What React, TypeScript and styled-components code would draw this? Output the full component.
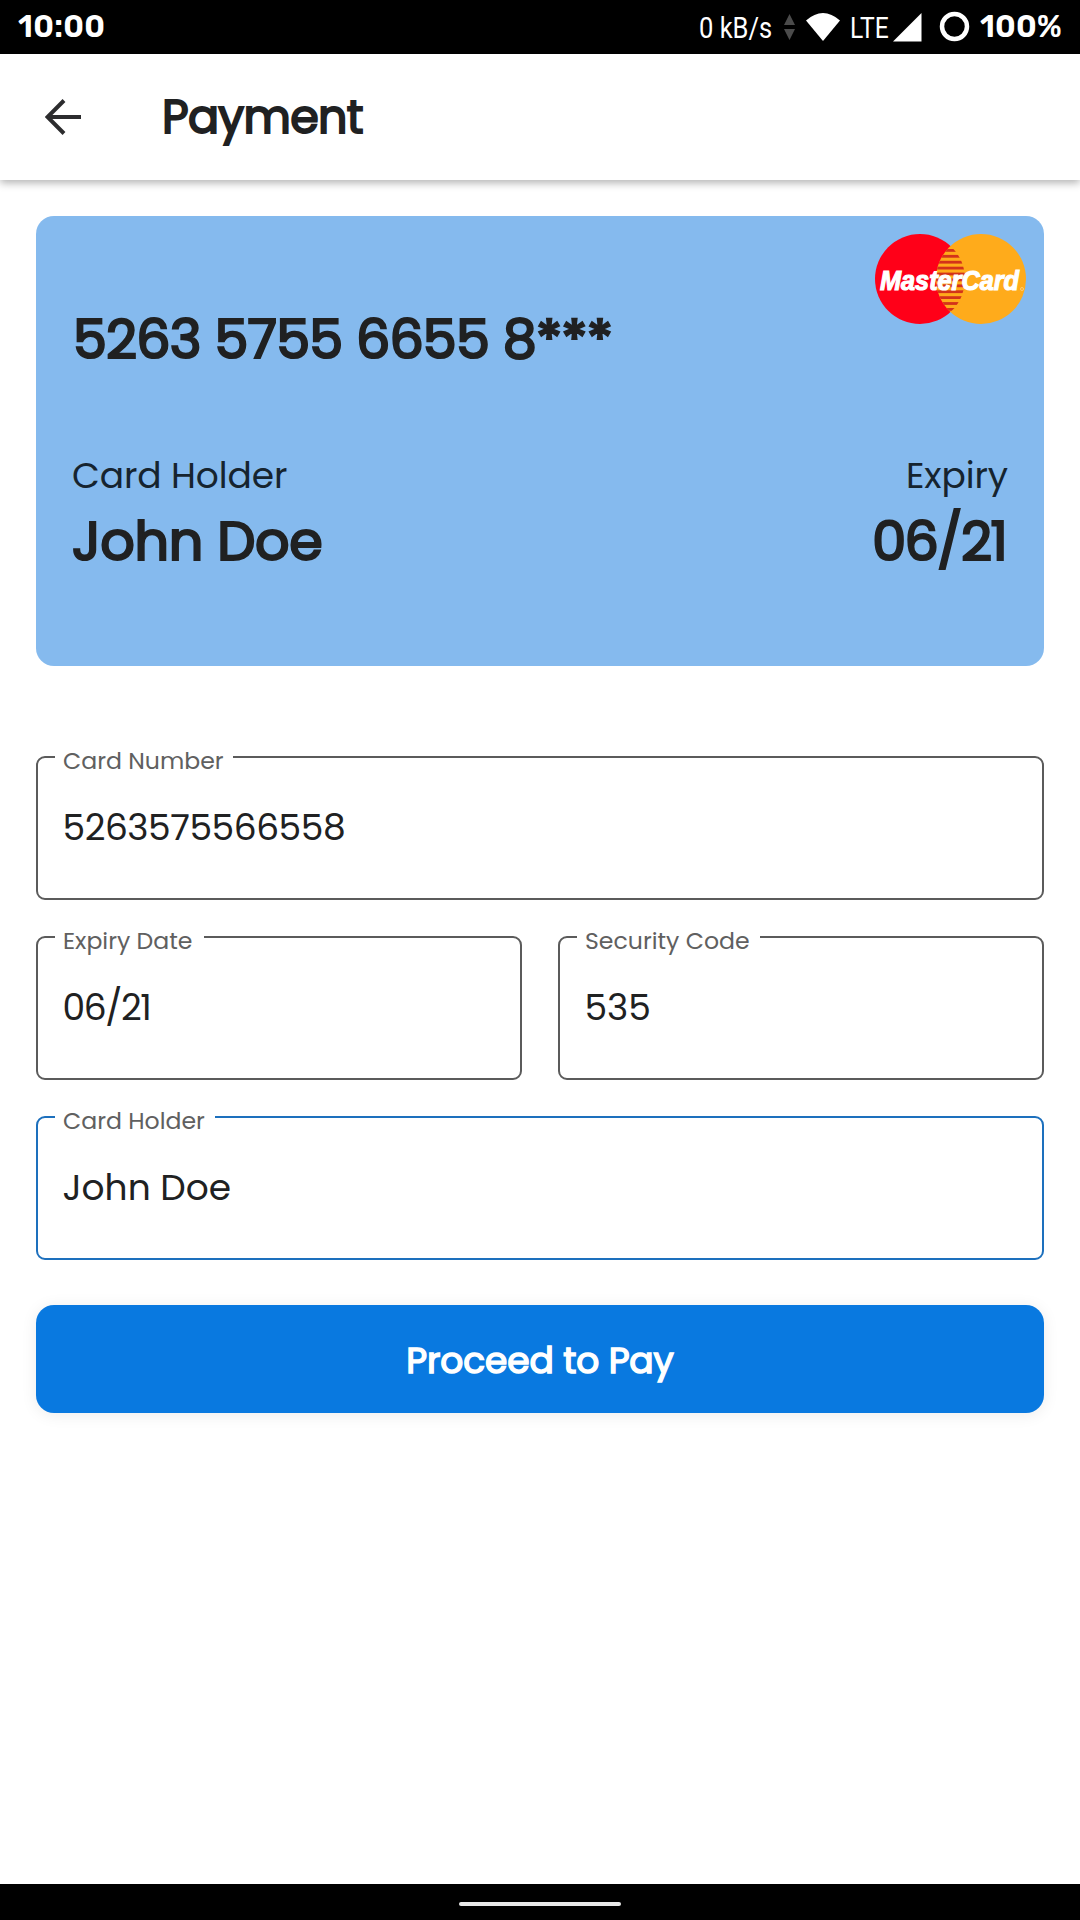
import React from "react";
import styled, { createGlobalStyle } from "styled-components";

const Global = createGlobalStyle`
  * { box-sizing: border-box; }
  body { margin: 0; background: #fff; }
`;

const Screen = styled.div`
  display: flex;
  flex-direction: column;
  width: 1080px;
  height: 1920px;
  overflow: hidden;
  background: #fff;
  color: #202122;
  font-family: Poppins, Inter, "Liberation Sans", sans-serif;
`;

const StatusBar = styled.div`
  display: flex;
  align-items: center;
  justify-content: space-between;
  flex: none;
  height: 54px;
  padding: 0 18px;
  background: #000;
  color: #fff;
`;

const StatusGroup = styled.div`
  display: flex;
  align-items: center;
`;

const StatusStrong = styled.span`
  font: 600 31px/52px Rubik, Inter, sans-serif;
  letter-spacing: 0.3px;
  white-space: nowrap;
`;

const StatusLight = styled.span<{ $width: number; $ratio: number }>`
  width: ${(p) => p.$width}px;
  padding-top: 2px;
  font: 400 29px/54px Roboto, sans-serif;
  white-space: nowrap;
  transform: scaleX(${(p) => p.$ratio});
  transform-origin: left center;
`;

const StatusIcons = styled.svg`
  display: block;
  flex: none;
`;

const Header = styled.header`
  display: flex;
  align-items: center;
  flex: none;
  gap: 80px;
  height: 126px;
  padding-left: 45px;
  background: #fff;
  box-shadow: 0 3px 8px rgba(0, 0, 0, 0.3);
`;

const Title = styled.h1`
  margin: 0;
  font-size: 46px;
  line-height: 56px;
  font-weight: 400;
  letter-spacing: -0.7px;
  -webkit-text-stroke: 1.9px currentColor;
`;

const Body = styled.main`
  display: flex;
  flex-direction: column;
  flex: 1;
  padding: 36px 36px 0;
`;

const Card = styled.section`
  display: flex;
  flex-direction: column;
  height: 450px;
  padding: 18px 18px 0 36px;
  border-radius: 18px;
  background: #85baee;
`;

const LogoRow = styled.div`
  display: flex;
  justify-content: flex-end;
  height: 72px;
`;

const CardNumber = styled.div`
  height: 66px;
  padding-left: 1px;
  font-size: 54px;
  line-height: 66px;
  letter-spacing: -0.82px;
  -webkit-text-stroke: 2.2px currentColor;
  white-space: nowrap;
`;

const CardDetails = styled.div`
  display: flex;
  justify-content: space-between;
  margin-top: 83px;
  padding-right: 18px;
`;

const Detail = styled.div<{ $end?: boolean }>`
  display: flex;
  flex-direction: column;
  align-items: ${(p) => (p.$end ? "flex-end" : "flex-start")};
`;

const DetailLabel = styled.span`
  font-size: 36px;
  line-height: 42px;
  letter-spacing: -0.1px;
  color: #16242f;
`;

const DetailValue = styled.span<{ $spacing: number; $inset?: number }>`
  margin-top: 11px;
  padding-right: ${(p) => p.$inset ?? 0}px;
  font-size: 54px;
  line-height: 66px;
  -webkit-text-stroke: 2.2px currentColor;
  letter-spacing: ${(p) => p.$spacing}px;
`;

const Form = styled.form`
  display: flex;
  flex-direction: column;
  gap: 25px;
  margin-top: 79px;
`;

const FieldRow = styled.div`
  display: grid;
  grid-template-columns: 1fr 1fr;
  gap: 36px;
`;

const FieldBox = styled.fieldset<{ $active?: boolean }>`
  min-width: 0;
  height: 155px;
  margin: 0;
  padding: 0 17px;
  border: 2px solid ${(p) => (p.$active ? "#1d70bd" : "#5b5b5b")};
  border-radius: 9px;
`;

const FieldLabel = styled.legend<{ $width: number }>`
  width: ${(p) => p.$width}px;
  height: 24px;
  padding: 8px 0 0 8px;
  font-size: 23.6px;
  line-height: 16px;
  white-space: nowrap;
  color: #606060;
`;

const FieldValue = styled.div<{ $spacing: number }>`
  padding: 38px 7.5px 0;
  font-size: 36px;
  line-height: 42px;
  letter-spacing: ${(p) => p.$spacing}px;
`;

const PayButton = styled.button`
  height: 108px;
  margin-top: 45px;
  padding: 4px 0 0;
  border: 0;
  border-radius: 18px;
  background: #0979e0;
  box-shadow: 0 2px 16px rgba(0, 0, 0, 0.08);
  color: #fff;
  font: inherit;
  font-size: 36px;
  line-height: 44px;
  letter-spacing: -0.1px;
  -webkit-text-stroke: 1.5px currentColor;
`;

const NavBar = styled.div`
  display: flex;
  align-items: center;
  justify-content: center;
  flex: none;
  height: 36px;
  padding-top: 4px;
  background: #000;
`;

const HomePill = styled.div`
  width: 162px;
  height: 4px;
  border-radius: 2px;
  background: #e8e8e8;
`;

const stripes = Array.from({ length: 11 }, (_, i) => 15 + i * 5.9);

const MasterCardLogo = () => (
  <svg width="151" height="90" viewBox="0 0 151 90">
    <defs>
      <clipPath id="redDisc">
        <circle cx="45" cy="45" r="45" />
      </clipPath>
      <clipPath id="stripeBand">
        <circle cx="106" cy="45" r="45" />
      </clipPath>
    </defs>
    <circle cx="45" cy="45" r="45" fill="#ff0018" />
    <circle cx="106" cy="45" r="45" fill="#ffab1b" />
    <g clipPath="url(#redDisc)">
      <g clipPath="url(#stripeBand)">
        {stripes.map((y) => (
          <rect key={y} x="58" y={y} width="34" height="2.8" fill="#d3331a" />
        ))}
      </g>
    </g>
    <text
      x="5"
      y="56"
      textLength="139"
      lengthAdjust="spacingAndGlyphs"
      fontFamily="'Liberation Sans', sans-serif"
      fontSize="27.5"
      fontWeight="700"
      fontStyle="italic"
      fill="#fff"
      stroke="#fff"
      strokeWidth="1.2"
    >
      MasterCard
    </text>
    <circle cx="147" cy="55" r="1.5" fill="none" stroke="#ffd489" strokeWidth="0.8" />
  </svg>
);

type FieldProps = {
  label: string;
  value: string;
  gap: number;
  valueSpacing?: number;
  active?: boolean;
};

const Field = ({ label, value, gap, valueSpacing = 0, active }: FieldProps) => (
  <FieldBox $active={active}>
    <FieldLabel $width={gap}>{label}</FieldLabel>
    <FieldValue $spacing={valueSpacing}>{value}</FieldValue>
  </FieldBox>
);

export default function App() {
  return (
    <Screen>
      <Global />
      <StatusBar>
        <StatusStrong>10:00</StatusStrong>
        <StatusGroup>
          <StatusLight $width={84} $ratio={0.88}>0 kB/s</StatusLight>
          <StatusIcons width="67" height="54" viewBox="783 0 67 54">
            <path d="M784 25l5.500-11 5.500 11zM784 29h11l-5.500 11z" fill="#4b4b4b" />
            <path d="M806 20.500Q823 5.500 840 20.500L823 41z" fill="#fff" />
          </StatusIcons>
          <StatusLight $width={43} $ratio={0.85}>LTE</StatusLight>
          <StatusIcons width="87" height="54" viewBox="893 0 87 54">
            <path d="M893 41.500L921.500 13V41.500z" fill="#fff" />
            <circle cx="954.500" cy="26.500" r="12.500" fill="none" stroke="#fff" strokeWidth="4.500" />
          </StatusIcons>
          <StatusStrong>100%</StatusStrong>
        </StatusGroup>
      </StatusBar>
      <Header>
        <svg width="37" height="36" viewBox="0 0 37 36" fill="none" stroke="#2c2c2e" strokeWidth="4">
          <path d="M19 1.500L2.500 18 19 34.500M2.500 18H36" />
        </svg>
        <Title>Payment</Title>
      </Header>
      <Body>
        <Card>
          <LogoRow>
            <MasterCardLogo />
          </LogoRow>
          <CardNumber>5263 5755 6655 8***</CardNumber>
          <CardDetails>
            <Detail>
              <DetailLabel>Card Holder</DetailLabel>
              <DetailValue $spacing={-0.3}>John Doe</DetailValue>
            </Detail>
            <Detail $end>
              <DetailLabel>Expiry</DetailLabel>
              <DetailValue $spacing={-1.7} $inset={2}>06/21</DetailValue>
            </Detail>
          </CardDetails>
        </Card>
        <Form>
          <Field label="Card Number" value="5263575566558" gap={178} valueSpacing={-0.45} />
          <FieldRow>
            <Field label="Expiry Date" value="06/21" gap={149} valueSpacing={-1.4} />
            <Field label="Security Code" value="535" gap={183} />
          </FieldRow>
          <Field label="Card Holder" value="John Doe" gap={160} active />
        </Form>
        <PayButton type="button">Proceed to Pay</PayButton>
      </Body>
      <NavBar>
        <HomePill />
      </NavBar>
    </Screen>
  );
}
